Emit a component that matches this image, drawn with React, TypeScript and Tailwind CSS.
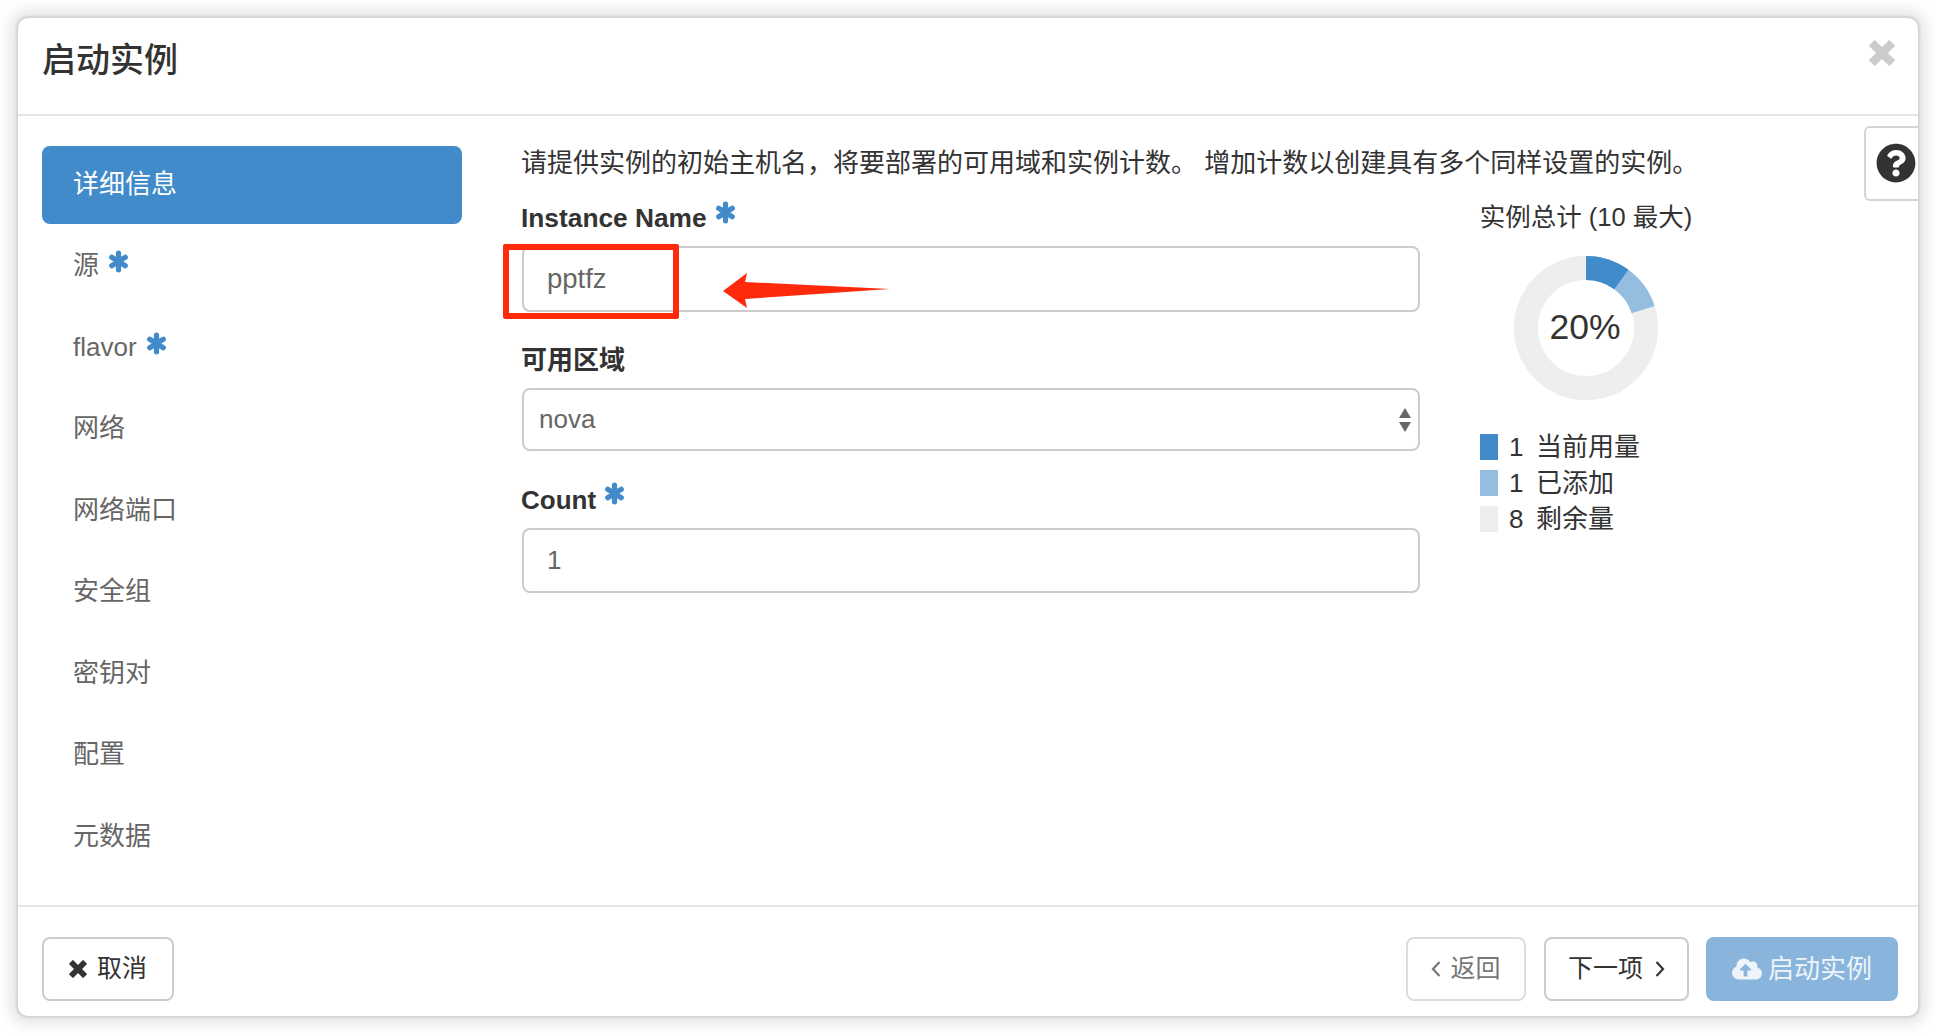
import { FaCloudUploadAlt, FaQuestionCircle } from "react-icons/fa"

const navItems = [
  { label: "详细信息", active: true },
  { label: "源", required: true },
  { label: "flavor", required: true },
  { label: "网络" },
  { label: "网络端口" },
  { label: "安全组" },
  { label: "密钥对" },
  { label: "配置" },
  { label: "元数据" },
]

const legend = [
  { count: 1, label: "当前用量", color: "bg-[#428bca]" },
  { count: 1, label: "已添加", color: "bg-[#94bde0]" },
  { count: 8, label: "剩余量", color: "bg-[#eeeeee]" },
]

function Required({ className }: { className: string }) {
  return (
    <svg width="21" height="23" viewBox="0 0 20 22" fill="none" className={`shrink-0 stroke-[#428bca] ${className}`} strokeWidth="5" strokeLinecap="round">
      <path d="M10 3V19M3.5 7 16.5 15M16.5 7 3.5 15" />
    </svg>
  )
}

function Cross({ size, className }: { size: number; className: string }) {
  return (
    <svg width={size} height={size} viewBox="0 0 25 25" fill="none" className={`shrink-0 ${className}`} strokeWidth="8" strokeLinecap="square">
      <path d="M5.5 5.5 19.5 19.5M19.5 5.5 5.5 19.5" />
    </svg>
  )
}

function Chevron({ d, className }: { d: string; className: string }) {
  return (
    <svg width="10" height="18" viewBox="0 0 10 18" fill="none" className={`shrink-0 ${className}`} strokeWidth="2.2">
      <path d={d} />
    </svg>
  )
}

export default function App() {
  return (
    <main className="h-[1034px] w-[1936px] overflow-hidden bg-white p-[18px] font-['Liberation_Sans','Noto_Sans_CJK_SC',sans-serif] text-[26px] text-[#333]">
      <div className="relative flex h-[998px] w-[1900px] flex-col rounded-[10px] bg-white shadow-[0_0_2px_2px_#d4d4d4,0_0_12px_6px_#e6e6e6,0_0_16px_12px_#f6f6f6]">
        {/* Header */}
        <header className="flex h-[98px] shrink-0 items-start justify-between border-b-2 border-[#e5e5e5] pr-[23px] pl-[24px]">
          <h1 className="mt-[19px] text-[34px] leading-[46px] font-medium">启动实例</h1>
          <Cross size={26} className="mt-[22px] stroke-[#cccccc]" />
        </header>

        {/* Help tab */}
        <div className="absolute top-[108px] right-0 flex h-[75px] w-[54px] items-center rounded-l-[6px] border-2 border-r-0 border-[#d5d5d5] bg-white pb-[2px] pl-[10px]">
          <FaQuestionCircle className="shrink-0 text-[40px] text-[#333]" />
        </div>

        {/* Body */}
        <div className="flex flex-1 pt-[30px] pl-[24px]">
          <nav className="flex w-[420px] shrink-0 flex-col gap-[3.5px]">
            {navItems.map((item) => (
              <div
                key={item.label}
                className={`flex h-[78px] items-center gap-[9px] rounded-[8px] pb-[2px] pl-[31px] ${
                  item.active ? "bg-[#428bca] text-white" : "text-[#666]"
                }`}
              >
                <span>{item.label}</span>
                {item.required && <Required className="-mt-[8px]" />}
              </div>
            ))}
          </nav>

          <div className="ml-[60px] flex-1">
            <p className="-ml-px h-[34px] leading-[34px] text-[#333]">
              请提供实例的初始主机名，将要部署的可用域和实例计数。 增加计数以创建具有多个同样设置的实例。
            </p>

            <div className="mt-[20px] flex gap-[59px]">
              <div className="w-[898px] shrink-0">
                <label className="mb-[10px] -ml-px flex h-[36px] items-center gap-[8px] pt-[2px] text-[26.3px] font-bold">
                  Instance Name
                  <Required className="-mt-[14px]" />
                </label>
                <div className="flex h-[66px] items-center rounded-[8px] border-2 border-[#cccccc] pl-[23px] text-[27.5px] text-[#666]">
                  pptfz
                </div>

                <label className="mt-[30px] mb-[10px] -ml-px flex h-[36px] items-center font-bold">可用区域</label>
                <div className="flex h-[63px] items-center justify-between rounded-[8px] border-2 border-[#cccccc] pr-[7px] pl-[15px] text-[#666]">
                  nova
                  <svg width="12" height="24" viewBox="0 0 12 24" className="fill-[#666]">
                    <path d="M6 0 12 10H0Z" />
                    <path d="M0 14H12L6 24Z" />
                  </svg>
                </div>

                <label className="mt-[31px] mb-[10px] -ml-px flex h-[36px] items-center gap-[8px] font-bold">
                  Count
                  <Required className="-mt-[14px]" />
                </label>
                <div className="flex h-[65px] items-center rounded-[8px] border-2 border-[#cccccc] pl-[23px] text-[#666]">
                  1
                </div>
              </div>

              <aside className="w-[214px] shrink-0">
                <h2 className="-mt-px h-[36px] text-center text-[25.5px] leading-[36px] whitespace-nowrap">实例总计 (10 最大)</h2>
                <div className="relative mx-auto mt-[21px] h-[144px] w-[144px]">
                  <svg width="144" height="144" viewBox="0 0 144 144" className="-rotate-90">
                    <circle cx="72" cy="72" r="60" fill="none" stroke="#eeeeee" strokeWidth="24" />
                    <circle cx="72" cy="72" r="60" fill="none" stroke="#94bde0" strokeWidth="24" strokeDasharray="75.4 377" />
                    <circle cx="72" cy="72" r="60" fill="none" stroke="#428bca" strokeWidth="24" strokeDasharray="37.7 377" />
                  </svg>
                  <div className="absolute inset-0 flex items-center justify-center pr-[2px] text-[35.5px]">20%</div>
                </div>
                <ul className="mt-[34px] space-y-[10px]">
                  {legend.map((row) => (
                    <li key={row.label} className="flex h-[26px] items-center">
                      <span className={`ml-px h-[26px] w-[18px] ${row.color}`} />
                      <span className="ml-[11px] w-[27px]">{row.count}</span>
                      <span>{row.label}</span>
                    </li>
                  ))}
                </ul>
              </aside>
            </div>
          </div>
        </div>

        {/* Footer */}
        <footer className="flex h-[111px] shrink-0 items-start justify-between border-t-2 border-[#e5e5e5] pt-[30px] pr-[20px] pl-[24px] text-[25px]">
          <button className="flex h-[64px] w-[132px] items-center justify-center gap-[10px] rounded-[8px] border-2 border-[#cccccc]">
            <Cross size={18} className="stroke-[#333]" />
            取消
          </button>
          <div className="flex gap-[18px]">
            <button className="flex h-[64px] w-[120px] items-center justify-center gap-[9px] rounded-[8px] border-2 border-[#dddddd] text-[#777]">
              <Chevron d="M8.5 2 2 9 8.5 16" className="stroke-[#777]" />
              返回
            </button>
            <button className="mr-[-1px] flex h-[64px] w-[145px] items-center justify-center gap-[12px] rounded-[8px] border-2 border-[#cccccc]">
              下一项
              <Chevron d="M1.5 2 8 9 1.5 16" className="stroke-[#333]" />
            </button>
            <button className="flex h-[64px] w-[192px] items-center justify-center gap-[6px] rounded-[8px] bg-[#89b4dc] text-[26px] text-[#eef4fa]">
              <FaCloudUploadAlt className="text-[30px]" />
              启动实例
            </button>
          </div>
        </footer>

        {/* Red annotation over the name field */}
        <div className="absolute top-[226px] left-[485px] h-[75px] w-[176px] rounded-[2px] border-[6px] border-[#ff2a0c]" />
        <svg width="170" height="40" viewBox="0 0 170 40" className="absolute top-[255px] left-[705px] fill-[#ff2a0c]">
          <path d="M0 18 24 0 22 9 167 16 22 26 24 35Z" />
        </svg>
      </div>
    </main>
  )
}
